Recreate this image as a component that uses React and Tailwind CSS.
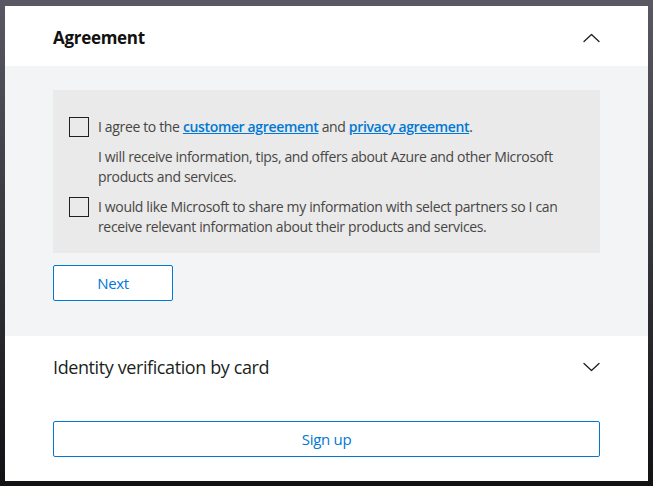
import React, { useState } from 'react';

const Chevron = ({ up }) => (
  <svg width="17" height="10" viewBox="0 0 17 10" fill="none" className="shrink-0">
    <path
      d={up ? 'M1 8.5 L8.5 1.5 L16 8.5' : 'M1 1.5 L8.5 8.5 L16 1.5'}
      stroke="#201f1e"
      strokeWidth="1.3"
      strokeLinecap="round"
      strokeLinejoin="round"
    />
  </svg>
);

const CheckRow = ({ checked, onChange, children }) => (
  <div className="flex items-start">
    <button
      type="button"
      onClick={onChange}
      className="w-[20px] h-[20px] border border-[#201f1e] bg-transparent shrink-0"
    >
      {checked && <span className="block text-[13px] leading-[18px] text-[#201f1e]">✓</span>}
    </button>
    <div className="ml-[9px] text-[14px] leading-[20px] tracking-[-0.35px] text-[#484644]">{children}</div>
  </div>
);

export default function App() {
  const [agree, setAgree] = useState(false);
  const [share, setShare] = useState(false);

  return (
    <div
      className="w-[653px] h-[486px] bg-gradient-to-b from-[#5a5963] via-[#35353c] to-[#121215] pl-[5px] pt-[6px]"
      style={{ fontFamily: '"Open Sans", "Noto Sans", sans-serif' }}
    >
      <div className="w-[643px] h-[475px] bg-white flex flex-col">
        {/* Agreement header */}
        <div className="h-[60px] px-12 pt-[3px] flex items-center justify-between">
          <h2 className="text-[17px] font-bold text-[#111] tracking-[-0.3px]">Agreement</h2>
          <Chevron up />
        </div>

        {/* Agreement body */}
        <div className="bg-[#f3f4f5] h-[270px] px-12 pt-6">
          <div className="bg-[#eaeaea] h-[163px] px-4 pt-[27px]">
            <CheckRow checked={agree} onChange={() => setAgree(!agree)}>
              I agree to the{' '}
              <a href="#" className="text-[#0078d4] font-semibold underline">customer agreement</a>{' '}
              and{' '}
              <a href="#" className="text-[#0078d4] font-semibold underline">privacy agreement</a>.
            </CheckRow>
            <p className="mt-[10px] pl-[29px] text-[14px] leading-[20px] tracking-[-0.35px] text-[#484644]">
              I will receive information, tips, and offers about Azure and other Microsoft products and services.
            </p>
            <div className="mt-[10px]">
              <CheckRow checked={share} onChange={() => setShare(!share)}>
                I would like Microsoft to share my information with select partners so I can receive relevant information about their products and services.
              </CheckRow>
            </div>
          </div>
          <button
            type="button"
            className="mt-3 w-[120px] h-[36px] border border-[#0078d4] rounded-[2px] bg-white text-[#0078d4] text-[15px] tracking-[-0.3px]"
          >
            Next
          </button>
        </div>

        {/* Identity header */}
        <div className="h-[62px] px-12 flex items-center justify-between">
          <h2 className="text-[18px] text-[#201f1e] tracking-[-0.4px]">Identity verification by card</h2>
          <Chevron />
        </div>

        <div className="px-12 pt-[23px]">
          <button
            type="button"
            className="w-full h-[36px] border border-[#0078d4] rounded-[2px] bg-white text-[#0078d4] text-[15px] tracking-[-0.3px]"
          >
            Sign up
          </button>
        </div>
      </div>
    </div>
  );
}
